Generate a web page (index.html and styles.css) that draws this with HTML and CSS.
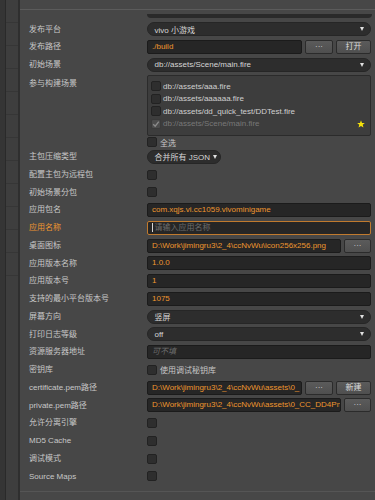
FILE: index.html
```html
<!DOCTYPE html>
<html>

<head>
    <meta charset='utf-8' name='viewport' content='width=device-width, initial-scale=1' />
    <link rel="stylesheet" href="styles.css">
</head>

<body>
    <div class='side'>
        <div class='side-a'></div>
        <div class='side-b'></div>
    </div>
    <div class='main'>
        <div class='rule'></div>
        <div class='stub'></div>
        <div class='form'>
            <div class='row'>
                <span class='label'>发布平台</span>
                <div class='select'><span>vivo 小游戏</span><i class='arrow'></i></div>
            </div>
            <div class='row'>
                <span class='label'>发布路径</span>
                <div class='ctrl'>
                    <div class='input'>./build</div>
                    <button class='btn dots'>···</button>
                    <button class='btn wide'>打开</button>
                </div>
            </div>
            <div class='row'>
                <span class='label'>初始场景</span>
                <div class='select'><span>db://assets/Scene/main.fire</span><i class='arrow'></i></div>
            </div>
            <div class='row tall'>
                <span class='label'>参与构建场景</span>
                <div class='list'>
                    <div class='item'><i class='check'></i><span>db://assets/aaa.fire</span></div>
                    <div class='item'><i class='check'></i><span>db://assets/aaaaaa.fire</span></div>
                    <div class='item'><i class='check'></i><span>db://assets/dd_quick_test/DDTest.fire</span></div>
                    <div class='item off'>
                        <i class='check on'><svg width='8' height='8' viewBox='0 0 8 8'><path d='M1.2 4.2 L3.2 6.2 L6.8 1.6' fill='none' stroke='#8a8a8a' stroke-width='1.4'/></svg></i>
                        <span>db://assets/Scene/main.fire</span>
                        <svg class='star' width='8' height='8' viewBox='0 0 10 10'><polygon points='5,0.3 6.3,3.6 9.8,3.7 7.1,5.9 8.1,9.5 5,7.5 1.9,9.5 2.9,5.9 0.2,3.7 3.7,3.6' fill='#f6e20a'/></svg>
                    </div>
                </div>
            </div>
            <div class='selall'><i class='check'></i><span>全选</span></div>
            <div class='row'>
                <span class='label'>主包压缩类型</span>
                <div><div class='select short'><span>合并所有 JSON</span><i class='arrow'></i></div></div>
            </div>
            <div class='row'>
                <span class='label'>配置主包为远程包</span>
                <div><i class='check'></i></div>
            </div>
            <div class='row'>
                <span class='label'>初始场景分包</span>
                <div><i class='check'></i></div>
            </div>
            <div class='row'>
                <span class='label'>应用包名</span>
                <div class='input'>com.xqjs.vi.cc1059.vivominigame</div>
            </div>
            <div class='row'>
                <span class='label hot'>应用名称</span>
                <div class='input focus'><i class='caret'></i><span class='hint'>请输入应用名称</span></div>
            </div>
            <div class='row'>
                <span class='label'>桌面图标</span>
                <div class='ctrl'>
                    <div class='input'>D:\Work\jimingru3\2_4\ccNvWu\icon256x256.png</div>
                    <button class='btn small'>···</button>
                </div>
            </div>
            <div class='row'>
                <span class='label'>应用版本名称</span>
                <div class='input'>1.0.0</div>
            </div>
            <div class='row'>
                <span class='label'>应用版本号</span>
                <div class='input'>1</div>
            </div>
            <div class='row'>
                <span class='label'>支持的最小平台版本号</span>
                <div class='input'>1075</div>
            </div>
            <div class='row'>
                <span class='label'>屏幕方向</span>
                <div class='select'><span>竖屏</span><i class='arrow'></i></div>
            </div>
            <div class='row'>
                <span class='label'>打印日志等级</span>
                <div class='select'><span>off</span><i class='arrow'></i></div>
            </div>
            <div class='row'>
                <span class='label'>资源服务器地址</span>
                <div class='input'><span class='hint italic'>可不填</span></div>
            </div>
            <div class='row'>
                <span class='label'>密钥库</span>
                <div class='pair'><i class='check'></i><span>使用调试秘钥库</span></div>
            </div>
            <div class='row'>
                <span class='label'>certificate.pem路径</span>
                <div class='ctrl'>
                    <div class='input'>D:\Work\jimingru3\2_4\ccNvWu\assets\0_</div>
                    <button class='btn dots'>···</button>
                    <button class='btn wide'>新建</button>
                </div>
            </div>
            <div class='row'>
                <span class='label'>private.pem路径</span>
                <div class='ctrl'>
                    <div class='input'>D:\Work\jimingru3\2_4\ccNvWu\assets\0_CC_DD4Pn</div>
                    <button class='btn small'>···</button>
                </div>
            </div>
            <div class='row'>
                <span class='label'>允许分离引擎</span>
                <div><i class='check'></i></div>
            </div>
            <div class='row'>
                <span class='label'>MD5 Cache</span>
                <div><i class='check'></i></div>
            </div>
            <div class='row'>
                <span class='label'>调试模式</span>
                <div><i class='check'></i></div>
            </div>
            <div class='row'>
                <span class='label'>Source Maps</span>
                <div><i class='check'></i></div>
            </div>
        </div>
        <div class='rule bottom'></div>
    </div>
</body>

</html>
```

FILE: styles.css
```css
* {
    box-sizing: border-box;
}

body {
    margin: 0;
    height: 500px;
    overflow: hidden;
    display: flex;
    background: #474747;
    font-family: "Liberation Sans", "Noto Sans CJK SC", sans-serif;
    font-size: 8px;
    color: #c8c8c8;
}

:root {
    --orange: #ee962f;
}

.side {
    display: flex;
    flex: none;
    width: 20px;
}

.side-a {
    width: 6px;
    background: #353535;
    border-right: 1px solid #2a2a2a;
}

.side-b {
    width: 14px;
    background-color: #3e3e3e;
    background-image: repeating-linear-gradient(to bottom, transparent 0 22px, #363636 22px 23px);
    background-size: 100% 290px;
    background-repeat: no-repeat;
    border-right: 2px solid #2f2f2f;
}

.main {
    flex: 1;
    min-width: 0;
}

.rule {
    height: 1px;
    margin-top: 9px;
    background: #5b5b5b;
}

.rule.bottom {
    margin-top: 6px;
    background: #555555;
}

.stub {
    height: 4px;
    margin: 4px 3px 0 127px;
    background: #2a2a2a;
    border-radius: 0 0 6px 6px;
}

.form {
    padding: 2.6px 4px 0 9px;
}

.row {
    display: grid;
    grid-template-columns: 118px minmax(0, 1fr);
    align-items: center;
    height: 17.75px;
}

.row.tall {
    height: auto;
    align-items: start;
    margin-top: 1.45px;
}

.label {
    line-height: 17.75px;
    white-space: nowrap;
}

.label.hot {
    color: var(--orange);
}

.select {
    display: flex;
    align-items: center;
    justify-content: space-between;
    height: 14px;
    padding: 0 6px 0 6.5px;
    background: #2d2d2d;
    border: 1px solid #262626;
    border-radius: 7px;
    color: #d6d6d6;
    white-space: nowrap;
}

.select.short {
    display: inline-flex;
    width: 74px;
    justify-content: flex-start;
    gap: 3px;
}

.arrow {
    width: 0;
    height: 0;
    border-left: 2.5px solid transparent;
    border-right: 2.5px solid transparent;
    border-top: 4px solid #e0e0e0;
}

.ctrl {
    display: flex;
    gap: 3px;
    min-width: 0;
}

.input {
    flex: 1;
    min-width: 0;
    height: 14px;
    padding: 0 4px;
    background: #262626;
    border: 1px solid #1b1b1b;
    border-radius: 2px;
    color: var(--orange);
    line-height: 12px;
    white-space: nowrap;
    overflow: hidden;
}

.input.focus {
    display: flex;
    align-items: center;
    gap: 1.5px;
    border-color: #c07a2e;
}

.caret {
    width: 1px;
    height: 9px;
    background: #d6d6d6;
}

.hint {
    color: #6c6c6c;
}

.italic {
    font-style: italic;
}

.btn {
    flex: none;
    height: 14px;
    padding: 0;
    font: inherit;
    line-height: 12px;
    color: #dcdcdc;
    background: linear-gradient(#5b5b5b, #4f4f4f);
    border: 1px solid #2b2b2b;
    border-radius: 2px;
}

.btn.dots {
    width: 28px;
}

.btn.wide {
    width: 35px;
}

.btn.small {
    width: 27px;
}

.check {
    display: block;
    width: 10px;
    height: 10px;
    background: #2e2e2e;
    border: 1px solid #222222;
    border-radius: 2px;
}

.check.on {
    display: flex;
    align-items: center;
    justify-content: center;
    background: #4c4c4c;
    border-color: #3a3a3a;
}

.list {
    height: 61px;
    padding: 4px 4px 0 3px;
    background: #3d3d3d;
    border: 1px solid #2b2b2b;
    border-radius: 2px;
    overflow: hidden;
}

.item {
    display: flex;
    align-items: center;
    gap: 2px;
    height: 12.4px;
    color: #d0d0d0;
    white-space: nowrap;
}

.item.off {
    color: #787878;
}

.star {
    margin-left: auto;
    margin-right: 1px;
}

.selall {
    display: flex;
    align-items: center;
    gap: 3px;
    height: 11.8px;
    margin-left: 118px;
}

.pair {
    display: flex;
    align-items: center;
    gap: 3px;
}
```
